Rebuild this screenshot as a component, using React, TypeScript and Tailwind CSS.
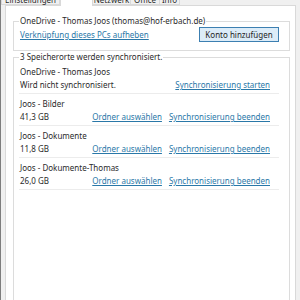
const tabs = [
  { label: 'Einstellungen', w: 'w-[59px]', active: false },
  { label: 'Konto', w: 'w-[33px]', active: true },
  { label: 'Netzwerk', w: 'w-[39px]', active: false },
  { label: 'Office', w: 'w-[30px]', active: false },
  { label: 'Info', w: 'w-[21px]', active: false },
]

const locations = [
  { name: 'OneDrive - Thomas Joos', info: 'Wird nicht synchronisiert.', links: ['Synchronisierung starten'] },
  { name: 'Joos - Bilder', info: '41,3 GB', links: ['Ordner auswählen', 'Synchronisierung beenden'] },
  { name: 'Joos - Dokumente', info: '11,8 GB', links: ['Ordner auswählen', 'Synchronisierung beenden'] },
  { name: 'Joos - Dokumente-Thomas', info: '26,0 GB', links: ['Ordner auswählen', 'Synchronisierung beenden'] },
]

function Link({ children }: { children: React.ReactNode }) {
  return <span className="text-[#2a78a8] underline underline-offset-1 cursor-pointer">{children}</span>
}

export default function App() {
  return (
    <div className="w-[300px] h-[300px] overflow-hidden bg-[#f0f0f0] border-l border-[#7d7d7d] font-['Segoe_UI','Noto_Sans',sans-serif] text-[8px] leading-[12px] text-[#2a2a2a] flex flex-col pl-[4px] pr-[4px]">
      {/* Tabs, cut off at the top */}
      <div className="flex h-[5px] items-end -ml-[4px]">
        {tabs.map((t) => (
          <div
            key={t.label}
            className={`${t.w} shrink-0 flex items-start justify-center pt-[4px] ${
              t.active
                ? 'bg-white border-x border-t border-[#d9d9d9] h-[20px] relative top-[1px] z-10'
                : 'bg-[#f0f0f0] border border-[#d9d9d9] h-[16px] -ml-px first:ml-0'
            }`}
          >
            {t.label}
          </div>
        ))}
      </div>

      {/* Tab panel */}
      <div className="flex-1 bg-white border border-[#d9d9d9] pl-[7px] pr-[5px] pt-[9px]">
        <fieldset className="border border-[#dcdcdc] pl-[5px] pr-[10px] pb-[8px]">
          <legend className="px-[1px]">OneDrive - Thomas Joos (thomas@hof-erbach.de)</legend>
          <div className="flex items-center justify-between pl-[1px]">
            <Link>Verknüpfung dieses PCs aufheben</Link>
            <button className="w-[80px] h-[15px] border border-[#3c7fb1] bg-[#dcecf8] text-[8px] leading-[12px] text-[#1e1e1e]">
              Konto hinzufügen
            </button>
          </div>
        </fieldset>

        <fieldset className="border border-[#dcdcdc] pl-[5px] pr-[10px] h-[260px]">
          <legend className="px-[1px]">3 Speicherorte werden synchronisiert.</legend>
          <div className="flex flex-col -mt-[1px]">
            {locations.map((loc) => (
              <div key={loc.name} className="pl-[1px] pt-[3px] pb-[2px] leading-[13px] border-b border-[#ececec]">
                <div>{loc.name}</div>
                <div className="flex justify-between pr-[9px]">
                  <span>{loc.info}</span>
                  <span className="flex gap-[7px]">
                    {loc.links.map((l) => (
                      <Link key={l}>{l}</Link>
                    ))}
                  </span>
                </div>
              </div>
            ))}
          </div>
        </fieldset>
      </div>
    </div>
  )
}
